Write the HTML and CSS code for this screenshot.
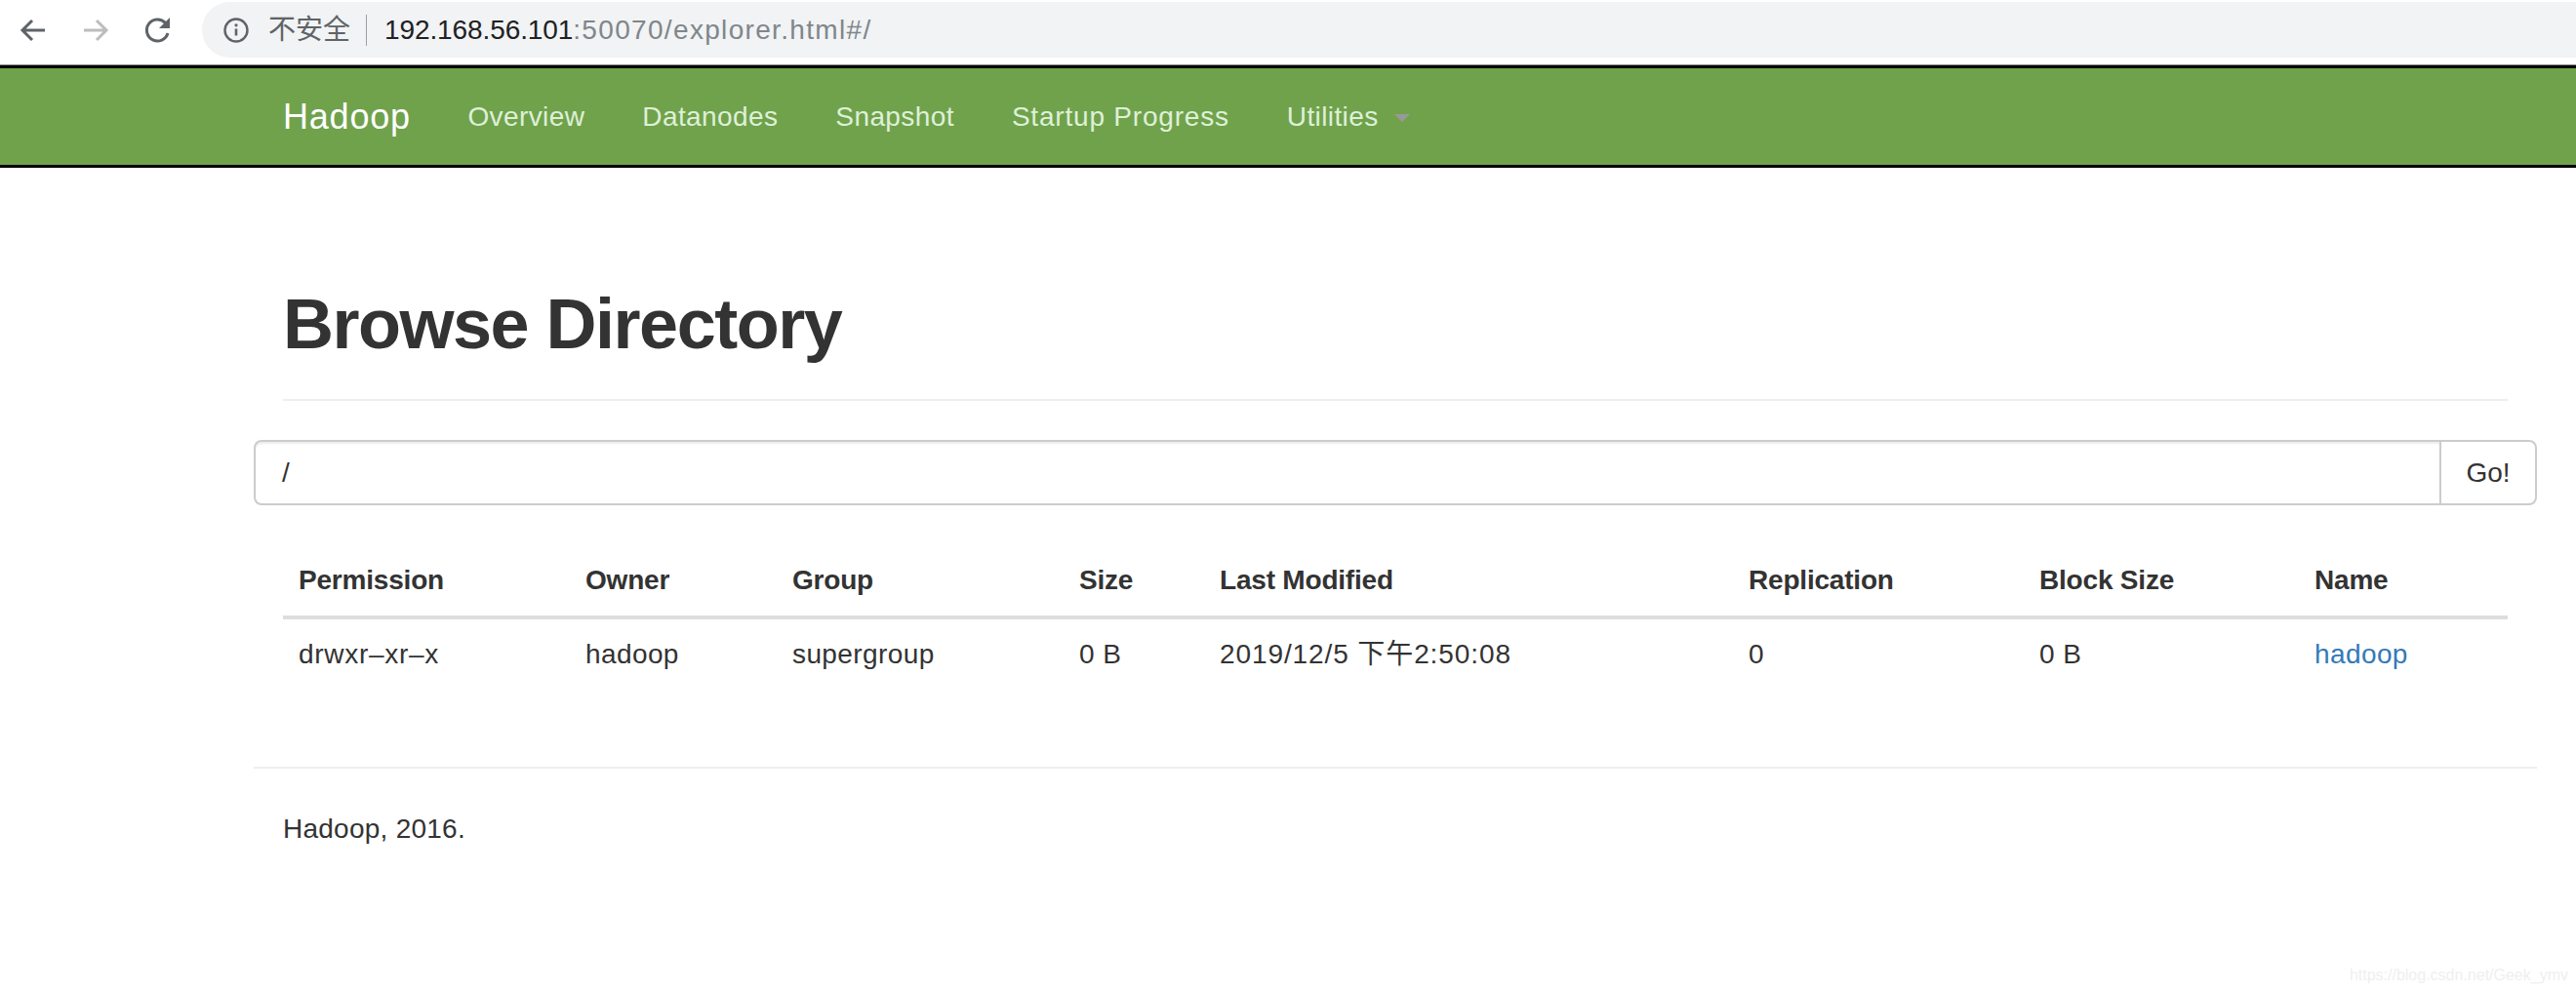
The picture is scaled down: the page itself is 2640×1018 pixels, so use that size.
FILE: index.html
```html
<!DOCTYPE html>
<html lang="en">
<head>
<meta charset="utf-8">
<title>Browsing HDFS</title>
<link rel="stylesheet" href="styles.css">
</head>
<body>
<header class="chrome">
  <div class="chrome-nav">
    <svg class="tool" viewBox="0 0 32 32"><path d="M28 16H6M15 6 5 16l10 10" fill="none" stroke="#5f6368" stroke-width="3"/></svg>
    <svg class="tool" viewBox="0 0 32 32"><path d="M4 16h22M17 6l10 10-10 10" fill="none" stroke="#bdbdbd" stroke-width="3"/></svg>
    <svg class="tool" viewBox="0 0 32 32"><path d="M26 19a11 11 0 1 1-2.6-10.6L27 12" fill="none" stroke="#5f6368" stroke-width="3"/><path d="M28 3v11H17z" fill="#5f6368"/></svg>
  </div>
  <div class="omnibox">
    <svg class="info" viewBox="0 0 28 28"><circle cx="14" cy="14" r="11.5" fill="none" stroke="#5f6368" stroke-width="2.4"/><path d="M14 12.5v7" stroke="#5f6368" stroke-width="2.6"/><circle cx="14" cy="8.8" r="1.6" fill="#5f6368"/></svg>
    <span class="insecure">不安全</span>
    <span class="omni-sep"></span>
    <span class="url"><b>192.168.56.101</b>:50070/explorer.html#/</span>
  </div>
</header>
<nav class="navbar">
  <a class="brand">Hadoop</a>
  <a class="nav-link">Overview</a>
  <a class="nav-link">Datanodes</a>
  <a class="nav-link">Snapshot</a>
  <a class="nav-link nav-link-wide">Startup Progress</a>
  <a class="nav-link">Utilities <span class="caret"></span></a>
</nav>
<main class="container">
  <div class="page-header"><h1>Browse Directory</h1></div>
  <div class="input-group">
    <div class="path-input">/</div>
    <div class="go-btn">Go!</div>
  </div>
  <table class="files">
    <thead>
      <tr><th>Permission</th><th>Owner</th><th>Group</th><th>Size</th><th>Last Modified</th><th>Replication</th><th>Block Size</th><th>Name</th></tr>
    </thead>
    <tbody>
      <tr><td class="perm">drwxr–xr–x</td><td>hadoop</td><td>supergroup</td><td>0 B</td><td class="modified">2019/12/5 下午2:50:08</td><td>0</td><td>0 B</td><td><a class="file-link">hadoop</a></td></tr>
    </tbody>
  </table>
  <footer class="footer">
    <p>Hadoop, 2016.</p>
  </footer>
</main>
<div class="watermark">https://blog.csdn.net/Geek_ymv</div>
</body>
</html>
```
FILE: styles.css
```css
* { box-sizing: border-box; }
html, body { margin: 0; padding: 0; background: #fff; }
body {
  font-family: "Liberation Sans", "Noto Sans CJK SC", sans-serif;
  font-size: 28px;
  line-height: 40px;
  color: #333;
  height: 1018px;
  overflow: hidden;
  position: relative;
}
.chrome {
  height: 70px;
  padding: 2px 0 8px;
  display: flex;
  background: #fff;
  border-bottom: 3px solid #000;
  box-shadow: inset 0 -1px 0 #888;
}
.chrome-nav { width: 207px; padding-left: 18px; display: flex; gap: 32px; align-items: center; }
.tool { width: 32px; height: 32px; }
.omnibox {
  flex: 1;
  display: flex;
  align-items: center;
  background: #f1f3f4;
  border-radius: 29px 0 0 29px;
  padding-left: 21px;
  color: #5f6368;
}
.info { width: 28px; height: 28px; margin-right: 19px; }
.insecure { font-size: 28px; }
.omni-sep { width: 1px; height: 32px; background: #9aa0a6; margin: 0 18px 0 16px; }
.url { color: #80868b; font-size: 28px; letter-spacing: 1.33px; }
.url b { font-weight: 400; color: #202124; letter-spacing: -0.1px; }
.navbar {
  height: 102px;
  padding: 0 0 0 290px;
  display: flex;
  align-items: center;
  background: #70a24c;
  border-bottom: 3px solid #000;
}
.brand { color: #fff; font-size: 36px; margin-right: 29px; letter-spacing: 0.8px; }
.nav-link { color: #dff0d8; padding: 0 29.5px; white-space: nowrap; letter-spacing: 0.4px; }
.nav-link-wide { letter-spacing: 0.8px; }
.caret {
  display: inline-block;
  width: 0;
  height: 0;
  margin-left: 8px;
  vertical-align: middle;
  border-top: 8px solid #999;
  border-left: 8px solid transparent;
  border-right: 8px solid transparent;
}
.container { width: 2340px; margin-left: 260px; }
.page-header { margin: 0 30px 40px; height: 239px; border-bottom: 2px solid #eee; padding-top: 121px; }
h1 { margin: 0; font-size: 72px; line-height: 78px; font-weight: 700; color: #333; letter-spacing: -1.5px; }
.input-group { display: flex; height: 67px; }
.path-input {
  flex: 1;
  border: 2px solid #ccc;
  border-right: 0;
  border-radius: 8px 0 0 8px;
  padding: 12px 27px;
  box-shadow: inset 0 2px 2px rgba(0,0,0,.075);
}
.go-btn {
  width: 100px;
  border: 2px solid #ccc;
  border-radius: 0 8px 8px 0;
  text-align: center;
  padding-top: 12px;
}
.files { width: 2280px; margin: 39px 30px 0; border-collapse: collapse; table-layout: fixed; }
.files th, .files td { text-align: left; padding: 16px; white-space: nowrap; }
.files th { font-weight: 700; border-bottom: 4px solid #ddd; padding: 18px 16px 16px; letter-spacing: -0.2px; }
.files td { padding-top: 16px; padding-bottom: 19px; letter-spacing: 0.4px; }
.files .perm { letter-spacing: 0.7px; }
.files .modified { letter-spacing: 0.9px; }
.files th:nth-child(1) { width: 294px; }
.files th:nth-child(2) { width: 212px; }
.files th:nth-child(3) { width: 294px; }
.files th:nth-child(4) { width: 144px; }
.files th:nth-child(5) { width: 542px; }
.files th:nth-child(6) { width: 298px; }
.files th:nth-child(7) { width: 282px; }
.files th:nth-child(8) { width: 214px; }
.file-link { color: #337ab7; }
.footer { margin-top: 76px; border-top: 2px solid #eee; padding: 42px 30px 0; letter-spacing: 0.25px; }
.footer p { margin: 0; }
.watermark {
  position: absolute;
  right: 8px;
  bottom: 8px;
  font-size: 16px;
  line-height: 20px;
  color: #efefef;
}
```
